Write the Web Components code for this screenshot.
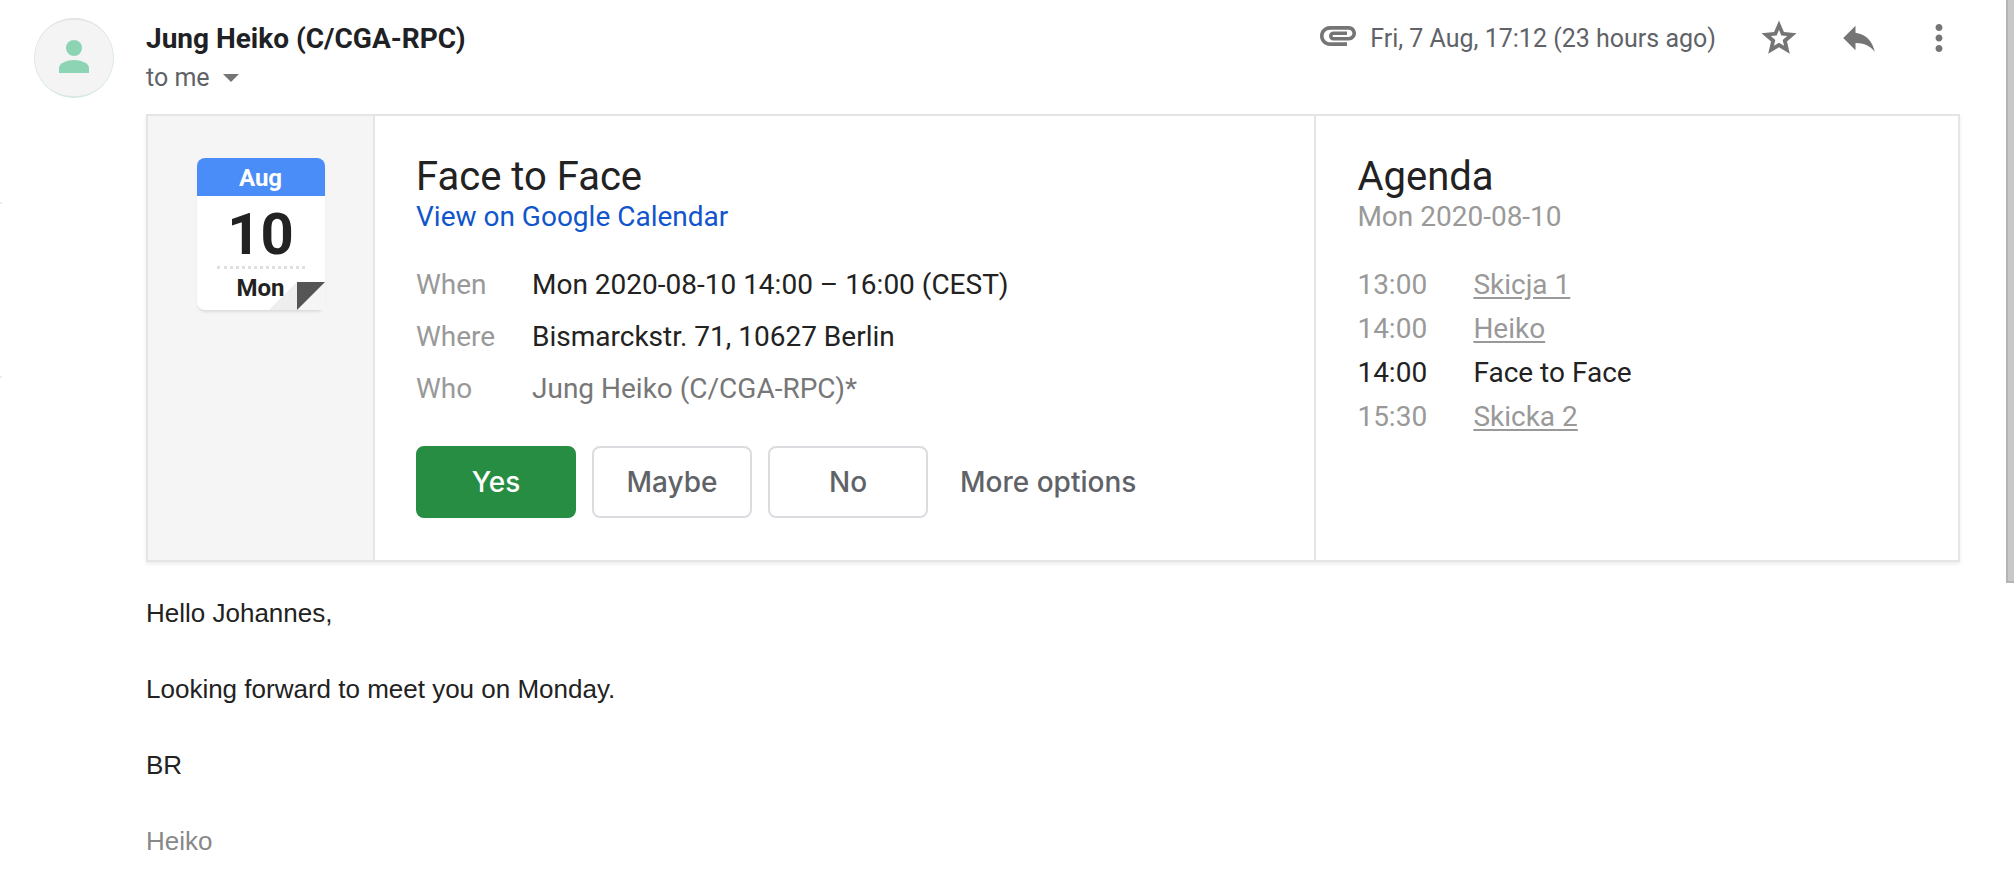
<!DOCTYPE html>
<html lang="en">
<head>
<meta charset="utf-8">
<title>Face to Face</title>
<style>
html, body { margin: 0; height: 100%; }
body { font-family: Roboto, "Liberation Sans", sans-serif; color: #222; background: #fff; overflow: hidden; }
</style>
</head>
<body>
<mail-message>
  <mail-avatar slot="avatar"></mail-avatar>
  <mail-header slot="header" sender="Jung Heiko (C/CGA-RPC)" recipient="to me" date="Fri, 7 Aug, 17:12 (23 hours ago)"></mail-header>
  <event-card>
    <date-leaf slot="date" month="Aug" day="10" weekday="Mon"></date-leaf>
    <event-details slot="details"></event-details>
    <event-agenda slot="agenda"></event-agenda>
  </event-card>
  <mail-body>
    <p>Hello Johannes,</p>
    <p>Looking forward to meet you on Monday.</p>
    <p>BR</p>
    <p class="signature">Heiko</p>
  </mail-body>
</mail-message>
<script>
function define(name, html) {
  customElements.define(name, class extends HTMLElement {
    connectedCallback() {
      if (this.shadowRoot) return;
      const fill = html.replace(/\{(\w+)\}/g, (m, key) => this.getAttribute(key) || '');
      this.attachShadow({ mode: 'open' }).innerHTML = fill;
    }
  });
}

define('mail-message', `
<style>
:host { display: grid; grid-template-columns: 4px 1fr 8px; height: 100%; }
.rail { padding-top: 202px; display: flex; flex-direction: column; gap: 172px; }
.rail i { width: 2px; height: 2px; background: #ececec; }
main { display: grid; grid-template-columns: 80px minmax(0, 1fr); column-gap: 32px; align-content: start; padding: 0 46px 0 30px; }
.avatar { padding-top: 18px; }
.content { min-width: 0; }
.track { height: 583px; background: #c8c8c8; border-left: 2px solid #b4b4b4; border-bottom: 2px solid #b4b4b4; box-sizing: border-box; }
</style>
<div class="rail"><i></i><i></i></div>
<main>
  <div class="avatar"><slot name="avatar"></slot></div>
  <div class="content"><slot name="header"></slot><slot></slot></div>
</main>
<div class="track"></div>`);

define('mail-avatar', `
<style>
:host { display: block; }
svg { display: block; width: 80px; height: 80px; }
</style>
<svg viewBox="0 0 80 80" role="img" aria-label="Sender">
  <circle cx="40" cy="40" r="40" fill="#cfe9de"/>
  <circle cx="40" cy="39.500" r="39.500" fill="#e4e6e5"/>
  <rect x="1" y="2" width="78" height="76" rx="37" fill="#f4f4f4"/>
  <circle cx="40" cy="30" r="8" fill="#8cd4b4"/>
  <path d="M25 55v-5c0-5 8-8 15-8s15 3 15 8v5z" fill="#8cd4b4"/>
</svg>`);

define('mail-header', `
<style>
:host { display: flex; justify-content: space-between; height: 114px; }
h1 { margin: 25px 0 0; font-size: 28px; line-height: 28px; font-weight: 700; color: #202124; }
button { border: 0; padding: 0; margin: 0; background: none; font: inherit; color: inherit; display: flex; align-items: center; }
.to { margin-top: 10px; gap: 13px; font-size: 25px; line-height: 30px; color: #5f6368; }
.meta { display: flex; align-items: center; height: 76px; color: #5f6368; font-size: 25px; }
.clip { margin-bottom: 4px; }
time { margin: 0 42px 0 14px; white-space: nowrap; }
.actions { display: flex; gap: 38px; }
svg { display: block; fill: #757575; }
</style>
<div>
  <h1>{sender}</h1>
  <button class="to">{recipient}<svg width="16" height="8" viewBox="0 0 16 8"><path d="M0 0h16l-8 8z"/></svg></button>
</div>
<div class="meta">
  <svg class="clip" width="36" height="20" viewBox="2 7 20 11" role="img" aria-label="Attachment"><path d="M2 12.500C2 9.460 4.460 7 7.500 7H18c2.210 0 4 1.790 4 4s-1.790 4-4 4H9.500C8.120 15 7 13.880 7 12.500S8.120 10 9.500 10H17v2H9.410c-.55 0-.55 1 0 1H18c1.100 0 2-.900 2-2s-.900-2-2-2H7.500C5.570 9 4 10.570 4 12.500S5.570 16 7.500 16H17v2H7.500C4.460 18 2 15.540 2 12.500z"/></svg>
  <time datetime="2020-08-07T17:12">{date}</time>
  <div class="actions">
    <button aria-label="Star"><svg width="42" height="42" viewBox="0 0 24 24"><path d="M22 9.240l-7.190-.620L12 2 9.190 8.630 2 9.240l5.460 4.730L5.820 21 12 17.270 18.180 21l-1.630-7.030z"/><path fill="#fff" d="M12 14.700l-2.900 1.700.800-3.200-2.600-2.300 3.400-.3L12 7.300l1.300 3.300 3.400.3-2.600 2.300.8 3.200z"/></svg></button>
    <button aria-label="Reply"><svg width="42" height="42" viewBox="0 0 24 24"><path d="M10 9V5l-7 7 7 7v-4.100c5 0 8.500 1.600 11 5.100-1-5-4-10-11-11z"/></svg></button>
    <button aria-label="More"><svg width="42" height="42" viewBox="0 0 24 24"><path d="M12 8c1.100 0 2-.900 2-2s-.900-2-2-2-2 .900-2 2 .900 2 2 2zm0 2c-1.100 0-2 .900-2 2s.900 2 2 2 2-.900 2-2-.900-2-2-2zm0 6c-1.100 0-2 .900-2 2s.900 2 2 2 2-.900 2-2-.900-2-2-2z"/></svg></button>
  </div>
</div>`);

define('event-card', `
<style>
:host { display: grid; grid-template-columns: 225px minmax(0, 942fr) minmax(0, 644fr); min-height: 444px; border: 2px solid #e5e5e5; box-shadow: 0 2px 4px rgba(0,0,0,.08); }
.date { background: #f5f5f5; padding-top: 42px; display: flex; justify-content: center; align-items: flex-start; }
.details, .agenda { border-left: 2px solid #e5e5e5; padding: 38px 0 40px 41px; }
</style>
<div class="date"><slot name="date"></slot></div>
<div class="details"><slot name="details"></slot></div>
<div class="agenda"><slot name="agenda"></slot></div>`);

define('date-leaf', `
<style>
:host { display: grid; grid-template: 38px 70px 44px / 128px; justify-items: center; align-items: start; position: relative; font-weight: 700; border-radius: 8px; background: #fff; box-shadow: 0 3px 3px -1px rgba(0,0,0,.1); color: #222; }
.month { width: 128px; text-align: center; line-height: 40px; height: 38px; background: #4a8df8; color: #fff; font-size: 24px; border-radius: 8px 8px 0 0; }
.day { font-size: 58px; line-height: 76px; }
.weekday { font-size: 24px; line-height: 38px; width: 88px; text-align: center; border-top: 3px dotted #e0e0e0; position: relative; z-index: 1; }
svg { position: absolute; right: 0; bottom: 0; }
</style>
<div class="month">{month}</div>
<div class="day">{day}</div>
<svg width="56" height="28" viewBox="0 0 56 28"><path d="M0 28L28 0v28z" fill="#eee"/><path d="M28 28h28V0z" fill="#f5f5f5"/><path d="M28 0h28L28 28z" fill="#555"/></svg>
<div class="weekday">{weekday}</div>`);

define('event-details', `
<style>
:host { display: block; font-size: 28px; }
h2 { margin: 0; font-size: 40px; line-height: 46px; font-weight: 400; }
a { color: #15c; text-decoration: none; line-height: 34px; display: block; width: max-content; }
table { border-collapse: collapse; margin-top: 25px; }
th, td { padding: 0; height: 52px; line-height: 32px; font-weight: 400; text-align: left; }
th { width: 116px; color: #999; }
.who { color: #777; }
.actions { display: flex; gap: 16px; margin-top: 31px; }
</style>
<h2>Face to Face</h2>
<a href="#calendar">View on Google Calendar</a>
<table>
  <tr><th scope="row">When</th><td>Mon 2020-08-10 14:00 – 16:00 (CEST)</td></tr>
  <tr><th scope="row">Where</th><td>Bismarckstr. 71, 10627 Berlin</td></tr>
  <tr><th scope="row">Who</th><td class="who">Jung Heiko (C/CGA-RPC)*</td></tr>
</table>
<div class="actions">
  <rsvp-button kind="primary">Yes</rsvp-button>
  <rsvp-button>Maybe</rsvp-button>
  <rsvp-button>No</rsvp-button>
  <rsvp-button kind="text">More options</rsvp-button>
</div>`);

define('rsvp-button', `
<style>
:host { display: block; }
button { box-sizing: border-box; min-width: 160px; height: 72px; border: 2px solid #dadce0; border-radius: 8px; background: #fff; color: #5f6368; font: 500 28px/32px Inter, Roboto, sans-serif; padding: 0 14px; }
.primary { background: #278d43; border-color: #278d43; color: #fff; }
.text { border-color: transparent; }
</style>
<button class="{kind}"><slot></slot></button>`);

define('event-agenda', `
<style>
:host { display: block; font-size: 28px; color: #999; }
h2 { margin: 0; font-size: 40px; line-height: 46px; font-weight: 400; color: #222; }
p { margin: 0; line-height: 34px; }
table { border-collapse: collapse; margin-top: 29px; }
td { padding: 0; height: 44px; line-height: 32px; }
td:first-child { width: 116px; }
a { color: inherit; text-underline-offset: 3px; }
.current { color: #222; }
</style>
<h2>Agenda</h2>
<p>Mon 2020-08-10</p>
<table>
  <tr><td>13:00</td><td><a href="#skicja-1">Skicja 1</a></td></tr>
  <tr><td>14:00</td><td><a href="#heiko">Heiko</a></td></tr>
  <tr class="current"><td>14:00</td><td>Face to Face</td></tr>
  <tr><td>15:30</td><td><a href="#skicka-2">Skicka 2</a></td></tr>
</table>`);

define('mail-body', `
<style>
:host { display: flex; flex-direction: column; gap: 38px; margin-top: 32px; font-family: "Liberation Sans", Arial, sans-serif; font-size: 26px; line-height: 38px; color: #222; }
::slotted(p) { margin: 0; }
::slotted(.signature) { color: #888; }
</style>
<slot></slot>`);
</script>
</body>
</html>
